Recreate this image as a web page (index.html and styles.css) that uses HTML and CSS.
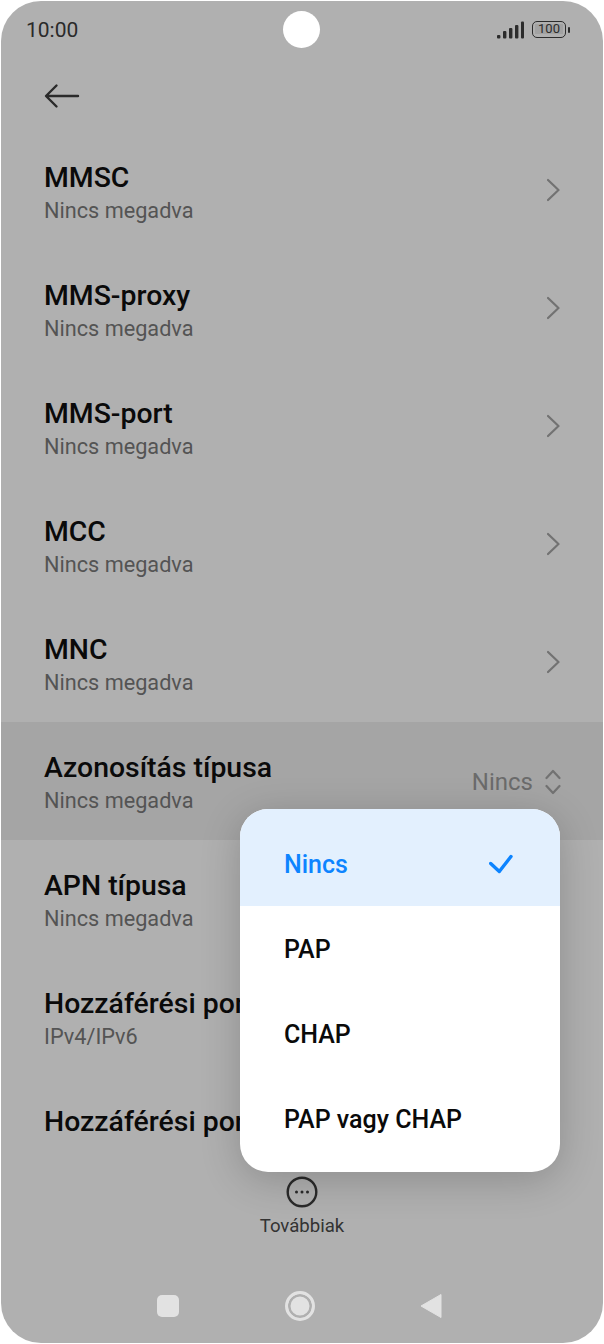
FILE: index.html
```html
<!DOCTYPE html>
<html lang="hu">
<head>
<meta charset="utf-8">
<title>Azonosítás típusa</title>
<link rel="stylesheet" href="styles.css">
</head>
<body>
<div class="phone">
  <header class="status">
    <span class="clock">10:00</span>
    <div class="status-icons">
      <svg class="signal" width="27" height="18" viewBox="0 0 27 18"><g fill="#2c2c2c"><rect x="0" y="14" width="3.4" height="3.5" rx="1"/><rect x="6" y="10" width="3.4" height="7.5" rx="1"/><rect x="12" y="7" width="3.4" height="10.5" rx="1"/><rect x="18" y="4" width="3.4" height="13.5" rx="1"/><rect x="24" y="0.5" width="3" height="17" rx="1"/></g></svg>
      <div class="battery"><span class="battery-body">100</span><span class="battery-cap"></span></div>
    </div>
  </header>
  <div class="camera"></div>
  <div class="toolbar">
    <svg width="36" height="26" viewBox="0 0 36 26" fill="none" stroke="#2a2a2a" stroke-width="2.4" stroke-linecap="round" stroke-linejoin="round"><path d="M2.500 13H34M12.500 2.500 2 13l10.500 10.500"/></svg>
  </div>
  <main class="list">
    <div class="row"><div class="texts"><div class="title">MMSC</div><div class="sub">Nincs megadva</div></div><svg class="chev" width="14" height="24" viewBox="0 0 14 24"><path d="M1 2 11.500 12 1 22"/></svg></div>
    <div class="row"><div class="texts"><div class="title">MMS-proxy</div><div class="sub">Nincs megadva</div></div><svg class="chev" width="14" height="24" viewBox="0 0 14 24"><path d="M1 2 11.500 12 1 22"/></svg></div>
    <div class="row"><div class="texts"><div class="title">MMS-port</div><div class="sub">Nincs megadva</div></div><svg class="chev" width="14" height="24" viewBox="0 0 14 24"><path d="M1 2 11.500 12 1 22"/></svg></div>
    <div class="row"><div class="texts"><div class="title">MCC</div><div class="sub">Nincs megadva</div></div><svg class="chev" width="14" height="24" viewBox="0 0 14 24"><path d="M1 2 11.500 12 1 22"/></svg></div>
    <div class="row"><div class="texts"><div class="title">MNC</div><div class="sub">Nincs megadva</div></div><svg class="chev" width="14" height="24" viewBox="0 0 14 24"><path d="M1 2 11.500 12 1 22"/></svg></div>
    <div class="row active"><div class="texts"><div class="title">Azonosítás típusa</div><div class="sub">Nincs megadva</div></div><div class="value"><span>Nincs</span><svg class="updown" width="16" height="26" viewBox="0 0 16 26"><path d="M1.500 9 8 2l6.500 7M1.500 17 8 24l6.500-7"/></svg></div></div>
    <div class="row"><div class="texts"><div class="title">APN típusa</div><div class="sub">Nincs megadva</div></div></div>
    <div class="row"><div class="texts"><div class="title">Hozzáférési pont protokoll</div><div class="sub">IPv4/IPv6</div></div></div>
    <div class="row"><div class="texts"><div class="title">Hozzáférési pont barangolás</div></div></div>
  </main>
  <div class="more">
    <svg width="32" height="32" viewBox="0 0 32 32"><circle cx="16" cy="16" r="14.300" fill="none" stroke="#2a2a2a" stroke-width="2.400"/><g fill="#2a2a2a"><circle cx="10.500" cy="16" r="1.500"/><circle cx="16" cy="16" r="1.500"/><circle cx="21.500" cy="16" r="1.500"/></g></svg>
    <span>Továbbiak</span>
  </div>
  <nav class="navbar">
    <span class="nav-square"></span>
    <span class="nav-circle"></span>
    <svg width="22" height="26" viewBox="0 0 22 26"><path d="M21 1.500v23L1 13z" fill="#e2e2e2" stroke="#e2e2e2" stroke-linejoin="round"/></svg>
  </nav>
  <div class="menu">
    <div class="menu-item selected"><span>Nincs</span><svg class="check" width="24" height="20" viewBox="0 0 24 20" fill="none" stroke="#0d84ff" stroke-width="3.400" stroke-linecap="round" stroke-linejoin="round"><path d="M1.700 9.500 10.300 17.500 22 2.500"/></svg></div>
    <div class="menu-item">PAP</div>
    <div class="menu-item">CHAP</div>
    <div class="menu-item">PAP vagy CHAP</div>
  </div>
</div>
</body>
</html>
```
FILE: styles.css
```css
* { box-sizing: border-box; }
html, body { margin: 0; height: 100%; background: #fff; }
body { padding: 1px; font-family: Roboto, "Liberation Sans", sans-serif; overflow: hidden; }
.phone {
  position: relative;
  width: 602px;
  height: 1342px;
  border-radius: 40px;
  background: #b0b0b0;
  overflow: hidden;
  display: flex;
  flex-direction: column;
}
.status {
  height: 57px;
  flex: none;
  padding: 0 33px 0 25px;
  display: flex;
  align-items: center;
  justify-content: space-between;
}
.clock { font-size: 21px; color: #2a2a2a; }
.status-icons { display: flex; align-items: center; gap: 8px; }
.battery { display: flex; align-items: center; gap: 2px; }
.battery-body {
  width: 34px;
  height: 17px;
  border: 1.500px solid #2c2c2c;
  border-radius: 5px;
  font-size: 13px;
  line-height: 14px;
  text-align: center;
  color: #2c2c2c;
  background: linear-gradient(#a2a2a2, #a2a2a2) no-repeat 2px 2px / 28px 10px;
}
.battery-cap { width: 2px; height: 6px; background: #2c2c2c; border-radius: 1px; }
.camera {
  position: absolute;
  left: 282px;
  top: 10px;
  width: 37px;
  height: 37px;
  border-radius: 50%;
  background: #fff;
}
.toolbar {
  height: 74px;
  flex: none;
  padding: 1px 0 0 43px;
  display: flex;
  align-items: center;
}
.list { flex: 1; min-height: 0; overflow: hidden; }
.row {
  height: 118px;
  padding: 28px 42px 0 43px;
  display: flex;
  align-items: flex-start;
  justify-content: space-between;
}
.row.active { background: #a5a5a5; }
.texts { flex: none; }
.title { font-size: 28.4px; line-height: 36px; font-weight: 500; color: #0a0a0a; white-space: nowrap; }
.sub { font-size: 21.7px; line-height: 28px; margin-top: 1px; color: #545454; white-space: nowrap; }
.chev, .updown { fill: none; stroke: #727272; stroke-width: 2.200; stroke-linecap: round; stroke-linejoin: round; }
.chev { margin-top: 18px; }
.value { display: flex; align-items: center; gap: 12px; font-size: 24px; color: #6b6b6b; margin-top: 18px; }
.more {
  flex: none;
  height: 84px;
  display: flex;
  flex-direction: column;
  align-items: center;
  gap: 8px;
  font-size: 18.6px;
  line-height: 20px;
  color: #333;
}
.more span { display: block; }
.navbar {
  flex: none;
  height: 83px;
  padding: 9px 161px 0 156px;
  display: flex;
  align-items: center;
  justify-content: space-between;
}
.nav-square { width: 22px; height: 22px; border-radius: 5px; background: #e2e2e2; }
.nav-circle {
  width: 30px;
  height: 30px;
  border-radius: 50%;
  background: #e2e2e2;
  border: 3px solid #e2e2e2;
  box-shadow: inset 0 0 0 2.500px #b0b0b0;
}
.menu {
  position: absolute;
  left: 239px;
  top: 808px;
  width: 320px;
  height: 363px;
  border-radius: 28px;
  background: #fff;
  overflow: hidden;
  box-shadow: 0 8px 40px rgba(0, 0, 0, 0.2);
}
.menu-item {
  height: 85px;
  padding: 1px 44px 0;
  display: flex;
  align-items: center;
  justify-content: space-between;
  font-size: 25px;
  font-weight: 500;
  color: #0a0a0a;
}
.menu-item.selected { height: 97px; padding: 14px 47px 0 44px; background: #e3f0fe; color: #0d84ff; }
.check { margin-top: -2px; }
```
